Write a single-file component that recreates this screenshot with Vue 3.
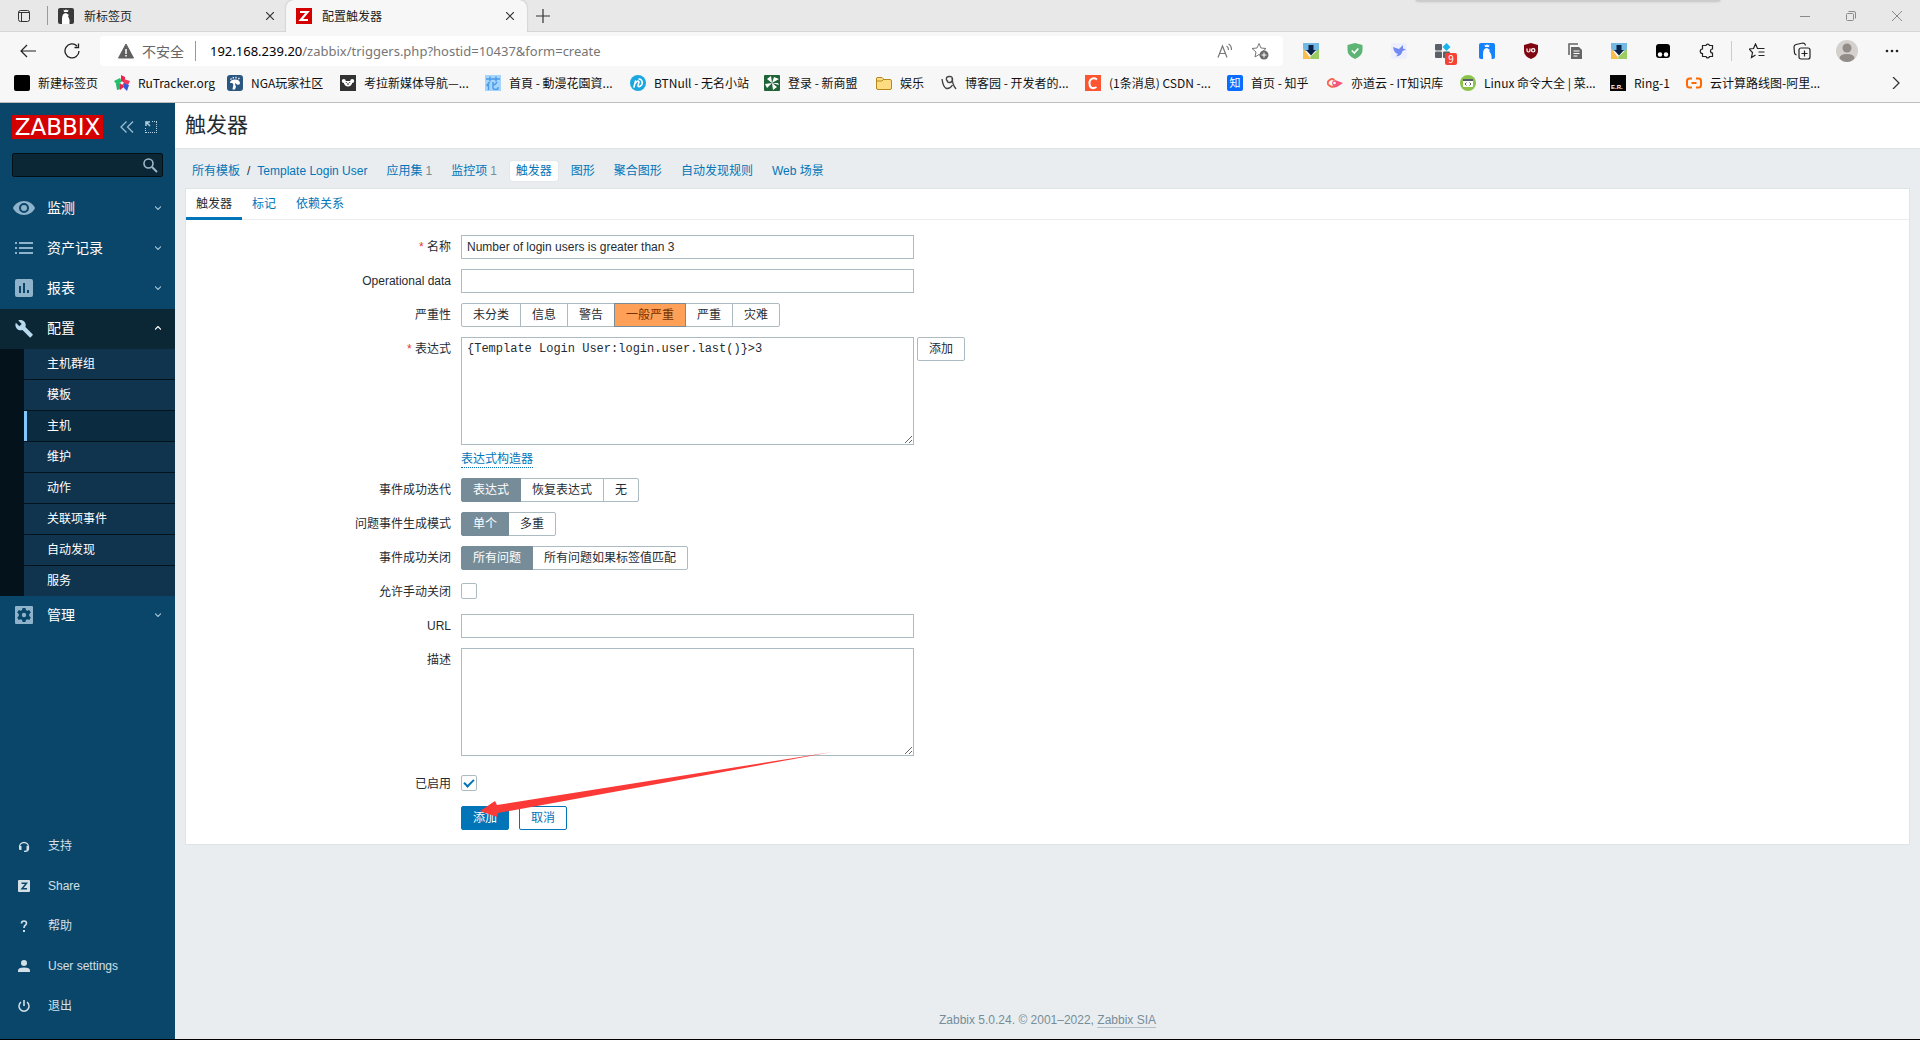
<script setup>
import { ref } from 'vue'

const bookmarks = [
  { text: '新建标签页', w: 100, svg: '<rect width="16" height="16" rx="2" fill="#000"/>' },
  { text: 'RuTracker.org', w: 113, svg: '<path d="M7 0l4 2v5H7z" fill="#e8244f"/><path d="M0 6l6-3 2 4-5 3z" fill="#23c16b"/><path d="M10 4l6 2-2 4-5-1z" fill="#ee3a5e"/><path d="M2 9l5-1v6l-4 1z" fill="#1fb86a"/><path d="M6 9l3-1 1 4-4 3z" fill="#e8244f"/><path d="M9 8l6 2-2 6-3-3z" fill="#3458d8"/><circle cx="8" cy="8" r="1.500" fill="#fff"/>' },
  { text: 'NGA玩家社区', w: 113, svg: '<rect width="16" height="16" rx="3" fill="#2b5680"/><path d="M3 8q0-3.500 5-3.500t5 4q-1 2-3 1L8 8q0 2 1 3.500l-1 3H5.500l.5-3Q7 9 5 8z" fill="#fff"/><path d="M3.500 4.500l1-1M6 3.500l.5-1.500M9 3.500V1.800M11.500 4.200l.8-1.400" stroke="#fff" stroke-width="1.200"/>' },
  { text: '考拉新媒体导航—...', w: 145, svg: '<rect width="16" height="16" fill="#333"/><circle cx="3.800" cy="6" r="2" fill="#fff"/><circle cx="12.200" cy="6" r="2" fill="#fff"/><path d="M4 6h8v2.500Q11 11.500 8 11.500T4 8.500z" fill="#fff"/><circle cx="6.300" cy="7.500" r=".6" fill="#333"/><circle cx="9.700" cy="7.500" r=".6" fill="#333"/><path d="M7.500 8h1v2h-1z" fill="#333"/>' },
  { text: '首頁 - 動漫花園資...', w: 145, svg: '<rect width="16" height="16" fill="#a5d5fb"/><path d="M1 4h14M5 1.500v5M11 1.500v5M4.500 7L1.500 11M3.500 9v6M8 7v6M8 10q3-.5 4-3M8 13q0 2 5 1v-2" stroke="#4a9be8" stroke-width="1.400" fill="none"/>' },
  { text: 'BTNull - 无名小站', w: 134, svg: '<circle cx="8" cy="8" r="8" fill="#1aa7e0"/><path d="M4 12l1.500-6M5 8.500q3-4 4-1.500l-1 3.500q0 2 2.500.5Q13 9 12 6q-1-2-3-2" stroke="#fff" stroke-width="1.600" fill="none" stroke-linecap="round"/>' },
  { text: '登录 - 新商盟', w: 112, svg: '<rect width="16" height="16" rx="1" fill="#1f6436"/><path d="M8 8L7 1 3 4zM8 8l7-4-5-2zM8 8L1 9l2 4zM8 8l1 7 4-3zM8 8l6 0 1 2z" fill="#fff"/>' },
  { text: '娱乐', w: 65, svg: '<path d="M1 2.500h5l2 2h6a1.500 1.500 0 0 1 1.500 1.500v7a1.500 1.500 0 0 1-1.500 1.500H2A1.500 1.500 0 0 1 .5 13V3z" fill="#ffdc82" stroke="#b58a1c"/><path d="M1 6h5l2-2" fill="none" stroke="#b58a1c"/>' },
  { text: '博客园 - 开发者的...', w: 144, svg: '<path d="M1 4q1 8 4.500 9.500Q9 14 11.500 10M6 6q-2-4 2-4.500t3.500 3.500q-1 3-3.500 2.500T7 5.500M11 3q.5 7 4 11" fill="none" stroke="#444" stroke-width="1.400"/>' },
  { text: '(1条消息) CSDN -...', w: 142, svg: '<rect width="16" height="16" fill="#fc5531"/><path d="M12 4.500Q9 2.500 6.500 4T4.500 9t2.500 4q2 .5 4.500-1" fill="none" stroke="#fff" stroke-width="2"/>' },
  { text: '首页 - 知乎', w: 100, svg: '<rect width="16" height="16" rx="2" fill="#0a6cff"/><text x="8" y="12" font-size="11" text-anchor="middle" fill="#fff" font-family="Noto Sans CJK SC, sans-serif">知</text>' },
  { text: '亦道云 - IT知识库', w: 133, svg: '<path d="M7.500 5Q4 2.500 1.500 6T4 11.500q3 1 5-1" fill="none" stroke="#f6674f" stroke-width="2"/><path d="M5 8q0-2 3-3l8 3-6 4q-4 1-5-4z" fill="#f2587c"/><circle cx="7.500" cy="8" r="1.300" fill="#fff"/>' },
  { text: 'Linux 命令大全 | 菜...', w: 150, svg: '<circle cx="8" cy="8" r="8" fill="#8bc34a"/><rect x="3" y="4" width="10" height="8" rx="1" fill="#fff"/><path d="M3 4h10v2H3z" fill="#53606b"/><path d="M6.500 7.500L5 9l1.500 1.500M9.500 7.500L11 9l-1.500 1.500" stroke="#53606b" fill="none"/>' },
  { text: 'Ring-1', w: 76, svg: '<rect width="16" height="16" fill="#050505"/><text x="1" y="14" font-size="6" font-weight="700" fill="#fff" font-family="Liberation Sans, sans-serif">E.R.</text>' },
  { text: '云计算路线图-阿里...', w: 150, svg: '<path d="M6 3.500H3.500Q1 3.500 1 6v4q0 2.500 2.500 2.500H6M10 3.500h2.500Q15 3.500 15 6v4q0 2.500-2.500 2.500H10M5.500 8h5" fill="none" stroke="#ff6a00" stroke-width="2"/>' }
]

const download = '<path d="M0 0h16v8H0z" fill="#74b9e4"/><path d="M0 5l8 11H0z" fill="#fbbd4b"/><path d="M16 6v10H8l-1-2z" fill="#9ccd63"/><path d="M5.500 2h5v5H13l-5 5.500L3 7h2.500z" fill="#0b2348"/>'
const extensions = [
  { name: '下载助手', svg: download },
  { name: '安全防护', svg: '<path d="M8 0l7.500 2v5q0 6-7.500 9Q.5 13 .5 7V2z" fill="#5db575"/><path d="M4.800 7.500l2.500 2.500 4-4.500" stroke="#fff" stroke-width="1.600" fill="none"/>' },
  { name: '飞鸟', svg: '<rect width="16" height="16" rx="2" fill="#edf0fc"/><path d="M2 4l6 2 4-4 0 3.500 3 1-3.500 1.500q-1 5-6.500 5.500l2-2.500q-4-1-5-7z" fill="#7288f2"/>' },
  { name: '扩展集', badge: '9', svg: '<rect x="0" y="1" width="7" height="6.500" rx="1" fill="#5b6166"/><rect x="0" y="8.500" width="7" height="6.500" rx="1" fill="#5b6166"/><rect x="8" y="8.500" width="7" height="6.500" rx="1" fill="#5b6166"/><path d="M11.500 0l4 4-4 4-4-4z" fill="#19b4ee"/>' },
  { name: '新标签页', svg: '<rect width="16" height="16" rx="2" fill="#1682fc"/><path d="M4 16v-5q0-6 4-6l3 2-1 1q3 3 2.500 8z" fill="#fff"/><path d="M6 4l-.5-2.500 1.500 1L8 1l1 1.500 1.500-1L10 4z" fill="#fff"/>' },
  { name: 'uBlock', svg: '<path d="M8 0l7 2v6q0 5-7 8-7-3-7-8V2z" fill="#800610"/><path d="M4 5.500v2q0 1.500 1.500 1.500T7 7.500v-2" stroke="#fff" stroke-width="1.200" fill="none"/><circle cx="10.200" cy="7.300" r="1.700" stroke="#fff" stroke-width="1.200" fill="none"/>' },
  { name: '复制', svg: '<path d="M11 1H2v11" fill="none" stroke="#666" stroke-width="1.600"/><path d="M4 4h8l3 3v9H4z" fill="#666"/><path d="M6.500 8h6M6.500 10.500h6M6.500 13h4" stroke="#fff"/>' },
  { name: '下载', svg: download },
  { name: '脚本管理', svg: '<rect x="1" y="1" width="14" height="14" rx="3" fill="#000"/><circle cx="5" cy="11.500" r="2.200" fill="#fff"/><circle cx="11" cy="11.500" r="2.200" fill="#fff"/>' },
  { name: '扩展', svg: '<path d="M4.500 2.500H7a1.800 1.800 0 0 1 3.500 0h3V6a2 2 0 0 0 0 4v3.500h-3a1.800 1.800 0 0 1-3.500 0H3.500V10.500a2.200 2.200 0 0 1 0-4.500V2.500z" fill="none" stroke="#222" stroke-width="1.200"/>' }
]

const menuTop = [
  { text: '监测', svg: '<path d="M12 5C7 5 2.700 8 1 12c1.700 4 6 7 11 7s9.300-3 11-7c-1.700-4-6-7-11-7zm0 12a5 5 0 1 1 0-10 5 5 0 0 1 0 10z"/><circle cx="12" cy="12" r="3"/>' },
  { text: '资产记录', svg: '<path d="M3 6h2v2H3zM3 11h2v2H3zM3 16h2v2H3zM7 6h14v2H7zM7 11h14v2H7zM7 16h14v2H7z"/>' },
  { text: '报表', svg: '<path d="M5 3a2 2 0 0 0-2 2v14a2 2 0 0 0 2 2h14a2 2 0 0 0 2-2V5a2 2 0 0 0-2-2zm2 7h2v7H7zm4-3h2v10h-2zm4 7h2v3h-2z" fill-rule="evenodd"/>' },
  { text: '配置', open: true, svg: '<path d="M22 19l-9-9c1-2.300.4-5-1.500-6.900C9.500 1.100 6.500.7 4.100 1.800L8.400 6.100l-3 3L1.100 4.800C-.1 7.200.4 10.200 2.400 12.200c1.900 1.900 4.600 2.400 6.900 1.500l9 9c.4.4 1 .4 1.400 0l2.300-2.300c.5-.4.5-1.100 0-1.400z" transform="translate(3 3) scale(.8)"/>' }
]
const submenu = ['主机群组', '模板', '主机', '维护', '动作', '关联项事件', '自动发现', '服务']
const menuBottom = [
  { text: '支持', svg: '<path d="M1.500 7a4.500 4.500 0 0 1 9 0v2Q10 11.500 6 11.500" fill="none" stroke="currentColor" stroke-width="1.300"/><path d="M1 6h2.500v4H2Q1 10 1 9zM8.500 6H11v3q0 1-1 1H8.500z"/>' },
  { text: 'Share', svg: '<rect width="12" height="12" rx="1"/><path d="M3.500 3.200H8.500L4 8.800H9" fill="none" stroke="#0a466a" stroke-width="1.500"/>' },
  { text: '帮助', svg: '<path d="M3.500 3.500Q3.500 1 6 1t2.500 2.300Q8.500 4.500 7 5.500 6 6.200 6 8" fill="none" stroke="currentColor" stroke-width="1.600"/><path d="M5 10h2v2H5z"/>' },
  { text: 'User settings', svg: '<circle cx="6" cy="3" r="3"/><path d="M0 12v-1.500Q0 7.500 6 7.500t6 3V12z"/>' },
  { text: '退出', svg: '<path d="M3 2.200a5 5 0 1 0 6 0" fill="none" stroke="currentColor" stroke-width="1.500"/><path d="M5.200 0h1.600v6H5.200z"/>' }
]
const crumbs = [
  { text: '应用集', count: 1 }, { text: '监控项', count: 1 }, { text: '触发器', active: true },
  { text: '图形' }, { text: '聚合图形' }, { text: '自动发现规则' }, { text: 'Web 场景' }
]
const severities = ['未分类', '信息', '警告', '一般严重', '严重', '灾难']
const groups = [
  { name: 'okevent', label: '事件成功迭代', options: ['表达式', '恢复表达式', '无'] },
  { name: 'mode', label: '问题事件生成模式', options: ['单个', '多重'] },
  { name: 'okclose', label: '事件成功关闭', options: ['所有问题', '所有问题如果标签值匹配'] }
]
const name = ref('Number of login users is greater than 3')
const opdata = ref('')
const severity = ref('一般严重')
const expression = ref('{Template Login User:login.user.last()}>3')
const chosen = ref({ okevent: '表达式', mode: '单个', okclose: '所有问题' })
const manualClose = ref(false)
const url = ref('')
const description = ref('')
const enabled = ref(true)
</script>

<template>
  <div class="screen">
    <header class="browser">
      <div class="tabstrip">
        <button class="tab-actions" aria-label="标签操作">
          <svg width="14" height="14" viewBox="0 0 14 14" fill="none" stroke="#333"><rect x="1.500" y="1.500" width="11" height="11" rx="2" /><path d="M1.500 3.500h11M4.500 3.500v9" /></svg>
        </button>
        <div class="tab">
          <svg width="16" height="16" viewBox="0 0 16 16"><rect width="16" height="16" rx="2" fill="#3a3a3a" /><path d="M4 16v-5q0-6 4-6l3 2-1 1q2 3 1.500 8z" fill="#fff" /><path d="M6 4l-.5-2.500 1.500 1L8 1l1 1.500 1.500-1L10 4z" fill="#fff" /></svg>
          <span>新标签页</span>
          <button class="close" aria-label="关闭标签"><svg width="8" height="8" viewBox="0 0 8 8"><path d="M0 0l8 8M8 0L0 8" stroke="#333" stroke-width="1.200" /></svg></button>
        </div>
        <div class="tab current">
          <svg width="16" height="16" viewBox="0 0 16 16"><rect width="16" height="16" fill="#d40000" /><path d="M4 4h7.500L4.800 12H12" fill="none" stroke="#fff" stroke-width="2.200" /></svg>
          <span>配置触发器</span>
          <button class="close" aria-label="关闭标签"><svg width="8" height="8" viewBox="0 0 8 8"><path d="M0 0l8 8M8 0L0 8" stroke="#333" stroke-width="1.200" /></svg></button>
        </div>
        <button class="new-tab" aria-label="新建标签"><svg width="14" height="14" viewBox="0 0 14 14"><path d="M7 0v14M0 7h14" stroke="#333" stroke-width="1.200" /></svg></button>
        <div class="window-buttons">
          <button aria-label="最小化"><svg width="10" height="10" viewBox="0 0 10 10"><path d="M0 5.500h10" stroke="#8a8a8a" /></svg></button>
          <button aria-label="还原"><svg width="10" height="10" viewBox="0 0 10 10" fill="none" stroke="#8a8a8a"><rect x=".5" y="2.500" width="7" height="7" rx="1" /><path d="M2.500.5H8A1.500 1.500 0 0 1 9.500 2v5.500" /></svg></button>
          <button aria-label="关闭"><svg width="10" height="10" viewBox="0 0 10 10"><path d="M0 0l10 10M10 0L0 10" stroke="#8a8a8a" /></svg></button>
        </div>
        <div class="drop-edge"></div>
      </div>

      <div class="toolbar">
        <button class="nav" aria-label="返回"><svg width="16" height="14" viewBox="0 0 16 14" fill="none" stroke="#222" stroke-width="1.200"><path d="M16 7H1M7 1L1 7l6 6" /></svg></button>
        <button class="nav" aria-label="刷新"><svg width="16" height="16" viewBox="0 0 16 16" fill="none" stroke="#222" stroke-width="1.300"><path d="M15 8a7 7 0 1 1-2-5M14.500.5v4h-4" /></svg></button>
        <div class="address">
          <svg width="16" height="16" viewBox="0 0 16 16"><path d="M8 1l7.500 14H.5z" fill="#5f5f5f" stroke="#5f5f5f" stroke-linejoin="round" /><path d="M8 6v5M8 12v1.500" stroke="#fff" stroke-width="1.500" /></svg>
          <span class="unsafe">不安全</span>
          <span class="url"><b>192.168.239.20</b>/zabbix/triggers.php?hostid=10437&amp;form=create</span>
          <button aria-label="大声朗读"><svg width="16" height="16" viewBox="0 0 16 16" fill="none" stroke="#777" stroke-width="1.200"><path d="M1 14.500L5.500 3 10 14.500M2.500 10.500h6M9.500 3q2 1 2 4M11.500 1q3 1.500 3 6" /></svg></button>
          <button aria-label="收藏此页"><svg width="18" height="18" viewBox="0 0 18 18"><path d="M8 1.500l2 4.500 5 .5-4 3.500 1 5-4-2.500L4 15l1-5-4-3.500L6 6z" fill="none" stroke="#777" /><circle cx="13" cy="13" r="4.500" fill="#6a6a6a" /><path d="M13 10.500v5M10.500 13h5" stroke="#fff" /></svg></button>
        </div>
        <div class="extensions">
          <button v-for="e in extensions" :key="e.name" :aria-label="e.name">
            <svg width="16" height="16" viewBox="0 0 16 16" v-html="e.svg"></svg>
            <span v-if="e.badge" class="badge">{{ e.badge }}</span>
          </button>
        </div>
        <div class="profile">
          <button aria-label="收藏夹"><svg width="16" height="16" viewBox="0 0 16 16" fill="none" stroke="#222" stroke-width="1.200"><path d="M9.500 5.500H8.500L6.500 1 4.500 5.500 0 6l3.500 3.500L2.500 14.500l4-2.500M9.500 5.500h6M9.500 9h6M9.500 12.500h6" /></svg></button>
          <button aria-label="集锦"><svg width="18" height="18" viewBox="0 0 18 18" fill="none" stroke="#222" stroke-width="1.200"><rect x="6" y="6" width="11" height="11" rx="2" /><path d="M11.500 8.500v6M8.500 11.500h6M3.500 13Q2 12.500 1.500 11L1 5q0-2 2-2.500L10 1q2 0 2.500 2.500" /></svg></button>
          <button aria-label="个人资料"><svg width="22" height="22" viewBox="0 0 22 22"><circle cx="11" cy="11" r="11" fill="#d3d0cd" /><circle cx="11" cy="8" r="4.500" fill="#918c87" /><path d="M3.500 18.500q0-4.500 7.500-4.500t7.500 4.500Q15 22 11 22t-7.500-3.500z" fill="#918c87" /></svg></button>
          <button aria-label="更多"><svg width="14" height="4" viewBox="0 0 14 4" fill="#222"><circle cx="2" cy="2" r="1.300" /><circle cx="7" cy="2" r="1.300" /><circle cx="12" cy="2" r="1.300" /></svg></button>
        </div>
      </div>

      <nav class="bookmarks">
        <a v-for="b in bookmarks" :key="b.text" href="#" :style="{ width: b.w + 'px' }">
          <svg width="16" height="16" viewBox="0 0 16 16" v-html="b.svg"></svg><span>{{ b.text }}</span>
        </a>
        <button aria-label="更多书签"><svg width="8" height="12" viewBox="0 0 8 12"><path d="M1 0l6 6-6 6" fill="none" stroke="#333" stroke-width="1.300" /></svg></button>
      </nav>
    </header>

    <div class="app">
      <aside class="sidebar">
        <div class="brand">
          <a href="#" class="logo">ZABBIX</a>
          <button aria-label="折叠"><svg width="14" height="12" viewBox="0 0 14 12" fill="none" stroke="#9dbdd0" stroke-width="1.300"><path d="M6.500 0.500L1 6l5.500 5.500M13 .5L7.500 6l5.500 5.500" /></svg></button>
          <button aria-label="隐藏"><svg width="12" height="12" viewBox="0 0 12 12" fill="none" stroke="#b5d0e0"><path d="M7 .5h5M11.500 1v11M.5 7v5M1 11.500h11" stroke-dasharray="1 1" /><path d="M1 5V1h4M1 1l4 4" stroke-width="1.500" /></svg></button>
        </div>
        <form class="search" @submit.prevent>
          <input type="text" aria-label="搜索" />
          <button aria-label="搜索"><svg width="15" height="15" viewBox="0 0 15 15" fill="none" stroke="#9cb8c9"><circle cx="5.500" cy="5.500" r="4.500" stroke-width="1.600" /><path d="M9 9l5 5" stroke-width="2" /></svg></button>
        </form>
        <nav class="menu">
          <a v-for="m in menuTop" :key="m.text" href="#" class="item" :class="{ open: m.open }">
            <svg class="icon" width="24" height="24" viewBox="0 0 24 24" fill="currentColor" v-html="m.svg"></svg>
            <span>{{ m.text }}</span>
            <svg class="chev" width="6" height="4" viewBox="0 0 6 4"><path :d="m.open ? 'M0 3.500l3-3 3 3' : 'M0 .5l3 3 3-3'" fill="none" stroke="currentColor" stroke-width="1.200" /></svg>
          </a>
          <div class="submenu">
            <a v-for="s in submenu" :key="s" href="#" :class="{ selected: s === '主机' }">{{ s }}</a>
          </div>
          <a href="#" class="item">
            <svg class="icon" width="24" height="24" viewBox="0 0 24 24" fill="currentColor"><path fill-rule="evenodd" d="M4 3a1 1 0 0 0-1 1v16a1 1 0 0 0 1 1h16a1 1 0 0 0 1-1V4a1 1 0 0 0-1-1zm6.500 2h3l.4 2 1.400.8 2-.8 1.500 2.600L17.200 11v2l1.600 1.400-1.500 2.600-2-.8-1.400.8-.4 2h-3l-.4-2-1.400-.8-2 .8-1.500-2.600L6.800 13v-2L5.200 9.600 6.700 7l2 .8 1.400-.8z" /><circle cx="12" cy="12" r="2.200" /></svg>
            <span>管理</span>
            <svg class="chev" width="6" height="4" viewBox="0 0 6 4"><path d="M0 .5l3 3 3-3" fill="none" stroke="currentColor" stroke-width="1.200" /></svg>
          </a>
        </nav>
        <nav class="user-menu">
          <a v-for="m in menuBottom" :key="m.text" href="#"><svg width="12" height="12" viewBox="0 0 12 12" fill="currentColor" v-html="m.svg"></svg>{{ m.text }}</a>
        </nav>
      </aside>

      <div class="content">
        <div class="title"><h1>触发器</h1></div>
        <nav class="crumbs">
          <a href="#">所有模板</a><i>/</i><a href="#">Template Login User</a>
          <span v-for="c in crumbs" :key="c.text" class="crumb" :class="{ active: c.active }"><a href="#">{{ c.text }}</a><sup v-if="c.count">{{ c.count }}</sup></span>
        </nav>
        <main class="panel">
          <div class="tabs"><a href="#" class="on">触发器</a><a href="#">标记</a><a href="#">依赖关系</a></div>
          <form class="form" @submit.prevent>
            <div class="row"><label class="label required" for="name">名称</label><input id="name" v-model="name" class="field" type="text" /></div>
            <div class="row"><label class="label" for="opdata">Operational data</label><input id="opdata" v-model="opdata" class="field" type="text" /></div>
            <div class="row">
              <span class="label">严重性</span>
              <div class="segmented severity" role="radiogroup" aria-label="严重性">
                <label v-for="s in severities" :key="s"><input v-model="severity" type="radio" name="severity" :value="s" /><span>{{ s }}</span></label>
              </div>
            </div>
            <div class="row">
              <label class="label required" for="expr">表达式</label>
              <div class="stack">
                <div class="line"><textarea id="expr" v-model="expression" class="field mono"></textarea><button type="button" class="btn plain">添加</button></div>
                <a href="#" class="builder">表达式构造器</a>
              </div>
            </div>
            <div v-for="g in groups" :key="g.name" class="row">
              <span class="label">{{ g.label }}</span>
              <div class="segmented" role="radiogroup" :aria-label="g.label">
                <label v-for="o in g.options" :key="o"><input v-model="chosen[g.name]" type="radio" :name="g.name" :value="o" /><span>{{ o }}</span></label>
              </div>
            </div>
            <div class="row"><label class="label" for="manual">允许手动关闭</label><input id="manual" v-model="manualClose" class="check" type="checkbox" /></div>
            <div class="row"><label class="label" for="url">URL</label><input id="url" v-model="url" class="field" type="text" /></div>
            <div class="row"><label class="label" for="desc">描述</label><textarea id="desc" v-model="description" class="field"></textarea></div>
            <div class="row enabled"><label class="label" for="enabled">已启用</label><input id="enabled" v-model="enabled" class="check" type="checkbox" /></div>
            <div class="row">
              <span class="label"></span>
              <div class="actions">
                <button type="submit" class="btn primary">添加</button><button type="button" class="btn">取消</button>
                <svg class="arrow" width="352" height="66" viewBox="0 0 352 66"><path d="M0 59L15 49l2 4L352 0 18 61l-1 4z" fill="#fb3a38" /></svg>
              </div>
            </div>
          </form>
        </main>
        <footer>Zabbix 5.0.24. © 2001–2022, <a href="#">Zabbix SIA</a></footer>
      </div>
    </div>
  </div>
</template>

<style>
body { margin: 0; }
</style>

<style scoped>
* { box-sizing: border-box; }
.screen { display: flex; flex-direction: column; min-height: 100vh; border-bottom: 1px solid #000; font: 12px/16px "Liberation Sans", "Noto Sans CJK SC", sans-serif; color: #1f2c33; }
button { padding: 0; border: 0; background: none; font: inherit; color: inherit; display: flex; align-items: center; justify-content: center; }
a { color: #0275b8; text-decoration: none; }
svg { display: block; flex: none; }

.browser { background: #f7f7f7; border-bottom: 1px solid #bdbdbd; font-family: "Noto Sans CJK SC", sans-serif; color: #222; }
.tabstrip { position: relative; display: flex; height: 32px; background: #e8e8e8; border-bottom: 1px solid #d6d6d6; }
.tab-actions { width: 48px; border-right: 1px solid #9a9a9a; margin: 6px 0; }
.tab { display: flex; align-items: center; gap: 10px; width: 238px; padding: 0 12px 0 10px; }
.tab.current { width: 241px; height: 32px; padding-right: 13px; background: #f7f7f7; border-radius: 8px 8px 0 0; box-shadow: 0 0 2px #aaa; clip-path: inset(0 -3px 0 -3px); }
.close { margin-left: auto; }
.new-tab { width: 34px; padding-right: 2px; }
.window-buttons { display: flex; margin-left: auto; }
.window-buttons button { width: 46px; }
.drop-edge { position: absolute; top: -4px; right: 200px; width: 304px; height: 5px; background: #ccc; border-radius: 4px; box-shadow: 0 0 3px #999; }

.toolbar { display: flex; align-items: center; height: 38px; padding: 0 6px; }
.nav { width: 44px; height: 30px; }
.address { display: flex; align-items: center; flex: 1; height: 30px; margin-left: 6px; padding: 0 14px 0 18px; background: #fff; border-radius: 4px; font-size: 14px; line-height: 20px; color: #767676; }
.unsafe { margin: 0 10px 0 8px; padding-right: 11px; border-right: 1px solid #999; color: #666; }
.url { flex: 1; padding-left: 4px; font-family: "Noto Sans", sans-serif; font-size: 13px; }
.url b { font-weight: 400; color: #000; }
.address button + button { margin-left: 18px; }
.extensions { display: flex; padding-left: 6px; }
.extensions button { position: relative; width: 44px; height: 24px; }
.badge { position: absolute; left: 24px; top: 14px; width: 12px; height: 12px; border-radius: 2px; background: #f44336; color: #fff; font-size: 10px; line-height: 12px; }
.profile { display: flex; border-left: 1px solid #ccc; margin-left: 2px; padding-left: 2px; height: 20px; align-items: center; }
.profile button { width: 45px; }

.bookmarks { display: flex; height: 32px; padding: 0 20px 6px 14px; }
.bookmarks a { display: flex; align-items: center; gap: 8px; flex: none; color: #111; white-space: nowrap; }
.bookmarks button { margin-left: auto; }

.app { display: flex; flex: 1; }
.sidebar { display: flex; flex-direction: column; flex: none; width: 175px; background: #0a466a; }
.brand { display: flex; align-items: center; padding: 12px 12px 0; }
.brand button { margin-left: 11px; }
.brand .logo { margin-right: 6px; }
.logo { width: 91px; height: 24px; background: #d40000; color: #fff; font: 23px/24px "DejaVu Sans", sans-serif; text-align: center; }
.search { display: flex; margin: 14px 12px 12px; height: 24px; padding-right: 4px; background: #0b2635; border: 1px solid #031016; border-radius: 2px; }
.search input { flex: 1; min-width: 0; border: 0; background: none; color: #fff; outline: 0; }
.item { display: flex; align-items: center; height: 40px; padding: 0 14px 2px 12px; font-size: 14px; line-height: 20px; color: #fff; }
.item .icon { color: #8fb3ca; margin-right: 11px; }
.item .chev { margin-left: auto; color: #9dbdd0; }
.item.open { background: #0b2635; }
.item.open .icon { color: #b9d9ee; }
.item.open .chev { color: #fff; }
.submenu { border-left: 24px solid #04131b; background: #04131b; display: grid; gap: 1px; }
.submenu a { height: 30px; padding-left: 23px; line-height: 30px; background: #10344d; color: #fff; }
.submenu a.selected { background: #0b2b40; border-left: 3px solid #7fc8ff; padding-left: 20px; }
.user-menu { margin-top: auto; padding-bottom: 13px; }
.user-menu a { display: flex; align-items: center; gap: 18px; height: 40px; padding-left: 18px; color: #d3e0e8; }

.content { display: flex; flex-direction: column; flex: 1; min-width: 0; background: #e9edf0; }
.title { height: 46px; padding: 0 10px; background: #fff; border-bottom: 1px solid #dfe4e7; }
h1 { margin: 0; font-size: 21px; line-height: 44px; font-weight: 400; }
.crumbs { display: flex; align-items: center; height: 20px; margin: 12px 17px 7px; }
.crumbs i { font-style: normal; margin: 0 7px; }
.crumb { display: flex; gap: 3px; padding: 2px 6px; margin-left: 7px; border-radius: 2px; }
.crumbs > a + .crumb { margin-left: 13px; }
.crumb.active { background: #fff; box-shadow: 0 0 1px #b8c2c8; }
.crumb sup { font-size: 12px; line-height: 16px; vertical-align: baseline; color: #768d99; }
.panel { margin: 0 10px; background: #fff; border: 1px solid #dfe4e7; }
.tabs { display: flex; height: 31px; border-bottom: 1px solid #e9edf0; }
.tabs a { height: 31px; padding: 0 10px; line-height: 31px; }
.tabs a.on { color: #1f2c33; border-bottom: 3px solid #0275b8; }
.form { display: grid; gap: 10px; padding: 15px 10px 14px 0; }
.row { display: flex; align-items: flex-start; min-height: 24px; }
.label { flex: none; width: 265px; margin-right: 10px; line-height: 24px; text-align: right; }
.required::before { content: "* "; color: #e33734; }
.field { flex: 0 1 453px; width: 453px; height: 24px; padding: 0 5px; border: 1px solid #acbbc2; border-radius: 0; background: #fff; font: inherit; color: #1f2c33; outline: 0; margin: 0; }
textarea.field { display: block; height: 108px; padding: 4px 5px; }
textarea.mono { font-family: "Liberation Mono", monospace; line-height: 14px; }
.stack { display: flex; flex-direction: column; align-items: flex-start; flex: 1; min-width: 0; }
.line { display: flex; align-items: flex-start; gap: 3px; width: 100%; }
.builder { margin-top: 6px; line-height: 16px; border-bottom: 1px dotted #0275b8; }
.segmented { display: flex; }
.segmented label { position: relative; display: block; }
.segmented label + label { margin-left: -1px; }
.segmented input { position: absolute; inset: 0; margin: 0; opacity: 0; }
.segmented span { display: block; height: 24px; padding: 0 11px; border: 1px solid #acbbc2; line-height: 22px; background: #fff; }
.segmented label:first-child span { border-radius: 2px 0 0 2px; }
.segmented label:last-child span { border-radius: 0 2px 2px 0; }
.segmented input:checked + span { position: relative; background: #768d99; border-color: #768d99; color: #fff; z-index: 1; }
.severity input:checked + span { background: #ffa059; color: #733100; }
.check { appearance: none; width: 16px; height: 16px; margin: 3px 0; border: 1px solid #acbbc2; border-radius: 2px; background: #fff; display: grid; place-items: center; }
.check:checked::before { content: ""; width: 8px; height: 4px; margin-bottom: 3px; border: solid #0275b8; border-width: 0 0 2px 2px; transform: rotate(-45deg); }
.enabled { margin-top: 6px; }
.btn { height: 24px; padding: 0 11px; border: 1px solid #0275b8; border-radius: 2px; background: #fff; color: #0275b8; }
.btn.plain { flex: none; border-color: #acbbc2; color: #1f2c33; }
.btn.primary { background: #0275b8; color: #fff; }
.actions { position: relative; display: flex; gap: 10px; }
.arrow { position: absolute; left: 19px; top: -54px; pointer-events: none; }
footer { margin-top: auto; padding: 0 0 11px; text-align: center; color: #768d99; }
footer a { color: #768d99; border-bottom: 1px solid #b4c0c7; }
</style>
